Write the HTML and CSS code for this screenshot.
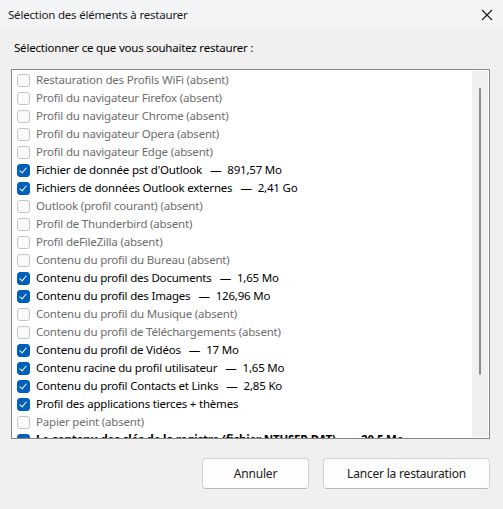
FILE: index.html
```html
<!DOCTYPE html>
<html lang="fr">
<head>
    <meta charset="UTF-8">
    <meta name="viewport" content="width=device-width, initial-scale=1.0">
    <title>Sélection des éléments à restaurer</title>
    <link rel="stylesheet" href="styles.css">
</head>
<body>

    <div class="titlebar">
        <span class="title">Sélection des éléments à restaurer</span>
        <svg class="close" width="12" height="12" viewBox="0 0 12 12"><path d="M1 1L11 11M11 1L1 11" stroke="#1a1a1a" stroke-width="1.1" fill="none"/></svg>
    </div>

    <div class="content">
        <div class="prompt">Sélectionner ce que vous souhaitez restaurer :</div>

        <div class="listbox">
            <div class="items">
                <div class="item off"><span class="box"></span>Restauration des Profils WiFi (absent)</div>
                <div class="item off"><span class="box"></span>Profil du navigateur Firefox (absent)</div>
                <div class="item off"><span class="box"></span>Profil du navigateur Chrome (absent)</div>
                <div class="item off"><span class="box"></span>Profil du navigateur Opera (absent)</div>
                <div class="item off"><span class="box"></span>Profil du navigateur Edge (absent)</div>
                <div class="item"><span class="box on"></span>Fichier de donnée pst d'Outlook<span class="dash">—</span>891,57 Mo</div>
                <div class="item"><span class="box on"></span>Fichiers de données Outlook externes<span class="dash">—</span>2,41 Go</div>
                <div class="item off"><span class="box"></span>Outlook (profil courant) (absent)</div>
                <div class="item off"><span class="box"></span>Profil de Thunderbird (absent)</div>
                <div class="item off"><span class="box"></span>Profil deFileZilla (absent)</div>
                <div class="item off"><span class="box"></span>Contenu du profil du Bureau (absent)</div>
                <div class="item"><span class="box on"></span>Contenu du profil des Documents<span class="dash">—</span>1,65 Mo</div>
                <div class="item"><span class="box on"></span>Contenu du profil des Images<span class="dash">—</span>126,96 Mo</div>
                <div class="item off"><span class="box"></span>Contenu du profil du Musique (absent)</div>
                <div class="item off"><span class="box"></span>Contenu du profil de Téléchargements (absent)</div>
                <div class="item"><span class="box on"></span>Contenu du profil de Vidéos<span class="dash">—</span>17 Mo</div>
                <div class="item"><span class="box on"></span>Contenu racine du profil utilisateur<span class="dash">—</span>1,65 Mo</div>
                <div class="item"><span class="box on"></span>Contenu du profil Contacts et Links<span class="dash">—</span>2,85 Ko</div>
                <div class="item"><span class="box on"></span>Profil des applications tierces + thèmes</div>
                <div class="item off"><span class="box"></span>Papier peint (absent)</div>
                <div class="item bold"><span class="box on"></span>Le contenu des clés de la registre (fichier NTUSER.DAT)<span class="dash">—</span>20,5 Mo</div>
            </div>
            <div class="scrollbar"><div class="thumb"></div></div>
        </div>

        <div class="buttons">
            <button class="btn cancel">Annuler</button>
            <button class="btn start">Lancer la restauration</button>
        </div>
    </div>

</body>
</html>
```

FILE: styles.css
```css
body { margin: 0; background: #f0f0f0; color: #000; font-family: "Noto Sans", "Open Sans", sans-serif; font-size: 11.5px; letter-spacing: -0.2px; height: 509px; overflow: hidden; }

.titlebar { height: 29px; background: #f3f4f6; display: flex; align-items: center; justify-content: space-between; padding: 0 10px 0 8px; }
.title { color: #1a1a1a; }
.close { margin-top: 1px; }

.content { padding: 0 13px 0 11px; }
.prompt { padding: 11px 0 0 3px; height: 29px; }

/* list with check boxes */
.listbox { height: 368px; border: 1px solid #858585; background: #fff; display: flex; }
.items { flex: 1; overflow: hidden; padding-top: 1px; }
.item { height: 18px; display: flex; align-items: center; padding-left: 5px; white-space: nowrap; line-height: 18px; }
.item.off { color: #6d6d6d; }
.item.bold { font-weight: bold; }
.box { width: 11px; height: 11px; border: 1px solid #c4c4c4; border-radius: 3px; background: #fafafa; margin-right: 6px; flex: none; position: relative; }
.box.on { background: #005fb8; border-color: #005fb8; }
.box.on::after { content: ""; position: absolute; left: 3px; top: 1px; width: 3px; height: 6px; border: solid #fff; border-width: 0 1px 1px 0; transform: rotate(40deg); }
.dash { margin: 0 6px 0 8px; }

.scrollbar { width: 16px; background: #f0f0f0; margin: 1px 1px 1px 0; position: relative; }
.thumb { position: absolute; left: 7px; top: 17px; width: 2px; height: 287px; background: #8a8a8a; border-radius: 1px; }

.buttons { display: flex; justify-content: flex-end; gap: 14px; padding-top: 19px; }
.btn { height: 31px; background: #fdfdfd; border: 1px solid #d3d3d3; border-bottom-color: #b8b8b8; border-radius: 4px; font-family: inherit; font-size: 12px; letter-spacing: -0.2px; color: #1a1a1a; padding: 0; }
.cancel { width: 107px; }
.start { width: 167px; }
```
